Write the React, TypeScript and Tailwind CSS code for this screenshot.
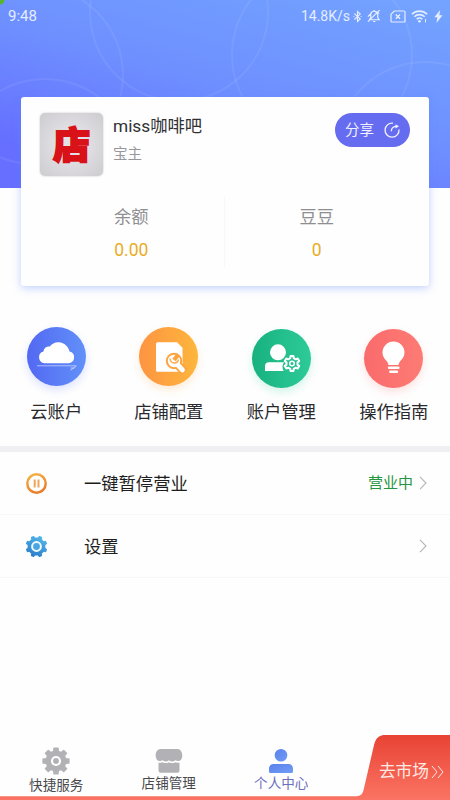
import type { ReactNode } from 'react';

// Toothed wheel as a polygon, shared by the settings, account and nav icons.
function gearPoints(cx: number, cy: number, teeth: number, outer: number, inner: number) {
  const pts: string[] = [];
  const step = (Math.PI * 2) / teeth;
  for (let i = 0; i < teeth; i++) {
    const a = i * step - Math.PI / 2;
    [
      [inner, -0.3],
      [outer, -0.19],
      [outer, 0.19],
      [inner, 0.3],
    ].forEach(([r, k]) => {
      pts.push(`${(cx + r * Math.cos(a + k * step)).toFixed(2)},${(cy + r * Math.sin(a + k * step)).toFixed(2)}`);
    });
  }
  return pts.join(' ');
}

function StatusBar() {
  return (
    <div className="relative flex h-[32px] items-center pl-[8px] pr-[7px] text-[#e4edff]">
      <span className="text-[15px] leading-none">9:48</span>
      <span className="ml-auto text-[14px] leading-none">14.8K/s</span>
      <svg className="ml-[3px] h-[15px] w-[9px]" viewBox="0 0 10 15" fill="none" stroke="currentColor" strokeWidth="1.3">
        <path d="M1.500 4.300 8 10.300 5 13V2l3 2.800-6.500 6" />
        <path d="M.5 7.500h1M8.500 7.500h1" />
      </svg>
      <svg className="ml-[5px] h-[14px] w-[14px]" viewBox="0 0 15 15" fill="none" stroke="currentColor" strokeWidth="1.300">
        <path d="M3 11.500h10l-1.500-2.200V6A3.800 3.800 0 0 0 4 5.400v3.900L2.600 11.500M6.500 13.400h2.500M1 13.500 13.500 1.200M1 8.200l4-4.400M11 3l2 2M7.600 1v1" />
      </svg>
      <svg className="ml-[9px] h-[13px] w-[16px]" viewBox="0 0 16 13" fill="none" stroke="currentColor" strokeWidth="1.200">
        <path d="M4.300 1h9.700a1 1 0 0 1 1 1v9a1 1 0 0 1-1 1H2a1 1 0 0 1-1-1V4.300z" />
        <path d="m5.800 4.500 4.200 4.200m0-4.200L5.800 8.700" strokeWidth="1.500" />
      </svg>
      <svg className="ml-[5px] h-[13px] w-[17px]" viewBox="0 0 17 13" fill="none" stroke="currentColor" strokeWidth="1.600">
        <path d="M.8 4.300a11 11 0 0 1 15.400 0M3.300 6.800a7.400 7.400 0 0 1 10.400 0M5.700 9.200a4 4 0 0 1 5.600 0" />
        <circle cx="8.500" cy="11.300" r="1.300" fill="currentColor" stroke="none" />
        <path d="M14.500 9v3.500" strokeWidth="1" />
      </svg>
      <svg className="ml-[6px] h-[13px] w-[9px]" viewBox="0 0 9 13" fill="currentColor">
        <path d="M6.200 0 .3 7.300h3L2.500 13l6-7.700H5.300z" />
      </svg>
    </div>
  );
}

function Stat({ label, value }: { label: string; value: string }) {
  return (
    <div className="flex flex-1 flex-col items-center">
      <span className="mt-[12px] text-[17.300px] leading-[18px] text-[#8f8f93]">{label}</span>
      <span className="mt-[14px] text-[17.500px] leading-[20px] text-[#e9ac25]">{value}</span>
    </div>
  );
}

function ShopCard() {
  return (
    <section className="relative mx-[21px] mt-[65px] h-[189px] rounded-[3px] bg-[#fefefe] shadow-[0_2px_9px_rgba(90,135,255,0.38)]">
      <div className="flex pl-[19px] pr-[19px] pt-[16px]">
        <div className="flex h-[63px] w-[63px] items-center justify-center rounded-[5px] bg-[radial-gradient(circle,#e2e1e5_30%,#cdcbd0_100%)] shadow-[0_0_2px_rgba(0,0,0,0.25)]">
          <span className="mt-[4px] text-[37px] font-black leading-none text-[#d9121a] [-webkit-text-stroke:2px_#d9121a] [paint-order:stroke] [stroke-linejoin:round]">店</span>
        </div>
        <div className="ml-[10px] pt-[3px]">
          <h1 className="text-[17.300px] leading-[20px] text-[#303034]">miss咖啡吧</h1>
          <p className="mt-[11px] text-[14.500px] leading-[16px] text-[#98989c]">宝主</p>
        </div>
        <button className="ml-auto flex h-[34px] w-[75px] items-center rounded-full bg-[#656cf0] pl-[10px] text-[#f1f1ff]">
          <span className="mt-[2px] text-[14.500px] leading-none">分享</span>
          <svg className="ml-[10px] h-[16px] w-[16px]" viewBox="0 0 16 16" fill="none" stroke="currentColor" strokeWidth="1.300">
            <path d="M9 1.200A7 7 0 1 0 15 7.500" />
            <path d="M7.300 9.300c0-3 1.600-5 5.500-5" />
            <path d="M11.500 2.200 15 4.300l-3.500 2.200z" fill="currentColor" stroke="none" />
          </svg>
        </button>
      </div>
      <div className="mt-[20px] flex h-[72px] pl-[18px] pr-[20px]">
        <Stat label="余额" value="0.00" />
        <div className="w-px bg-[#f8f8fa]" />
        <Stat label="豆豆" value="0" />
      </div>
    </section>
  );
}

const shortcuts: { label: string; disc: string; icon: ReactNode }[] = [
  {
    label: '云账户',
    disc: 'bg-linear-to-r from-[#5368f2] to-[#6290f9] shadow-[0_4px_9px_rgba(90,115,250,0.2)]',
    icon: (
      <>
        <path d="M17.500 36.200a5.900 5.900 0 0 1-1-11.600c.2-3.200 3-5.500 6.300-5 2-3 5.500-4.600 9.200-4.300 5.300.4 9.500 4.300 10.500 9.300a5.900 5.900 0 0 1-.5 11.600z" fill="#fff" />
        <path d="M10 38.800h39M49.500 39l-6 4.200M43.500 41h4" stroke="#fff" strokeWidth=".7" opacity=".75" fill="none" />
      </>
    ),
  },
  {
    label: '店铺配置',
    disc: 'bg-linear-to-r from-[#fd9442] to-[#fdb63c] shadow-[0_4px_9px_rgba(255,165,60,0.2)]',
    icon: (
      <>
        <path d="M18.500 15.300H38l5.500 5.500v22a2 2 0 0 1-2 2h-23a1.500 1.500 0 0 1-1.500-1.500V16.800a1.500 1.500 0 0 1 1.500-1.500z" fill="#fff" />
        <path d="m35 34 10.500 11" stroke="#fda43f" strokeWidth="8.500" />
        <circle cx="35" cy="34" r="8.200" fill="#fda43f" />
        <circle cx="35" cy="34" r="6.200" fill="#fff" />
        <path d="m37 36 6.500 7" stroke="#fff" strokeWidth="4.800" strokeLinecap="round" />
        <path d="m39 28-4 5" stroke="#fda43f" strokeWidth="4.200" />
        <path d="M31 31.500c.3 2.500 2 4.500 4.500 4.500s3.500-1.500 4-3.500" stroke="#fda43f" strokeWidth="1.300" fill="none" />
      </>
    ),
  },
  {
    label: '账户管理',
    disc: 'mt-[2px] bg-linear-to-r from-[#16b17e] to-[#2dcb98] shadow-[0_4px_9px_rgba(40,205,150,0.2)]',
    icon: (
      <>
        <circle cx="26" cy="23.300" r="8" fill="#fff" />
        <path d="M13 42v-4.800a4 4 0 0 1 4-4h15c-2 3-1.800 6-.3 8.800z" fill="#fff" />
        <polygon points={gearPoints(40, 34.500, 6, 7.600, 5.600)} fill="none" stroke="#fff" strokeWidth="2" strokeLinejoin="round" />
        <circle cx="40" cy="34.500" r="2.300" fill="none" stroke="#fff" strokeWidth="1.500" />
      </>
    ),
  },
  {
    label: '操作指南',
    disc: 'mt-[2px] bg-linear-to-r from-[#fa6b6c] to-[#fd7b74] shadow-[0_4px_9px_rgba(255,110,110,0.2)]',
    icon: (
      <>
        <path d="M24.500 36c-.4-4.500-6-6-6-12.500a11 11 0 0 1 22 0c0 6.500-5.600 8-6 12.500z" fill="#fff" />
        <path d="M25 38.800h9.400M26.300 42.800h6.700" stroke="#fff" strokeWidth="2.400" strokeLinecap="round" />
      </>
    ),
  },
];

function Shortcuts() {
  return (
    <nav className="mt-[41px] grid h-[119px] grid-cols-4">
      {shortcuts.map(({ label, disc, icon }) => (
        <a key={label} className="flex flex-col items-center">
          <div className="h-[75px]">
            <div className={`h-[59px] w-[59px] rounded-full ${disc}`}>
              <svg className="h-[59px] w-[59px]" viewBox="0 0 59 59">{icon}</svg>
            </div>
          </div>
          <span className="whitespace-nowrap text-[17.300px] leading-[20px] text-[#29292d]">{label}</span>
        </a>
      ))}
    </nav>
  );
}

function MenuRow({ icon, label, status }: { icon: ReactNode; label: string; status?: string }) {
  return (
    <div className="flex h-[63px] items-center border-b border-[#f8f8fa] pl-[26px] pr-[23px]">
      {icon}
      <span className="ml-[37px] mt-[2px] text-[17.300px] leading-[20px] text-[#1d1d20]">{label}</span>
      {status && <span className="-mt-px ml-auto text-[15px] leading-[20px] text-[#249540]">{status}</span>}
      <svg
        className={`${status ? 'ml-[6px]' : 'ml-auto'} h-[14px] w-[8px] text-[#b5b5b9]`}
        viewBox="0 0 8 14"
        fill="none"
        stroke="currentColor"
        strokeWidth="1.100"
      >
        <path d="m1 .8 6 6.200-6 6.200" />
      </svg>
    </div>
  );
}

function PauseIcon() {
  return (
    <svg className="h-[21px] w-[21px]" viewBox="0 0 21 21" fill="none">
      <defs>
        <linearGradient id="pause" x1="0" y1="0" x2=".4" y2="1">
          <stop stopColor="#f4b545" />
          <stop offset="1" stopColor="#ea7f2c" />
        </linearGradient>
      </defs>
      <circle cx="10.500" cy="10.500" r="9.200" stroke="url(#pause)" strokeWidth="2.500" />
      <path d="M8.700 6.500v8M12.500 6.500v8" stroke="#efa558" strokeWidth="2" />
    </svg>
  );
}

function SettingsIcon() {
  return (
    <svg className="h-[21px] w-[21px]" viewBox="0 0 21 21">
      <defs>
        <linearGradient id="settings" x1="0" y1="0" x2="0" y2="1">
          <stop stopColor="#51b5e8" />
          <stop offset="1" stopColor="#2a7dcc" />
        </linearGradient>
      </defs>
      <g transform="rotate(22.500 10.500 10.500)">
        <polygon points={gearPoints(10.500, 10.500, 8, 11, 9)} fill="url(#settings)" />
      </g>
      <circle cx="10.500" cy="10.500" r="4.400" fill="#4aa5e3" stroke="#f3faff" strokeWidth="2" />
    </svg>
  );
}

function TabBar() {
  return (
    <footer className="relative mt-auto h-[65px] shrink-0">
      <div className="grid h-full grid-cols-4 text-[13.600px] leading-[16px] text-[#49494d]">
        <a className="flex flex-col items-center pt-[12px]">
          <svg className="h-[28px] w-[28px]" viewBox="0 0 28 28">
            <polygon points={gearPoints(14, 14, 8, 13, 9.800)} fill="#b2b2b6" stroke="#b2b2b6" strokeWidth="1.500" strokeLinejoin="round" />
            <circle cx="14" cy="14" r="4" fill="#b2b2b6" stroke="#fff" strokeWidth="2.200" />
          </svg>
          <span className="mt-[2px]">快捷服务</span>
        </a>
        <a className="flex flex-col items-center pt-[13px]">
          <svg className="h-[26px] w-[28px]" viewBox="0 0 28 26" fill="#b2b2b6">
            <path d="M5.500 1h17c3 0 4.800 3.200 4.800 6.300 0 3-1.300 5.700-3.600 5.700-1.600 0-2.500-.3-3.300-.8-1 .8-2 1.200-3.200 1.200s-2.200-.4-3.200-1.200c-1 .8-2 1.200-3.200 1.200s-2.200-.4-3.200-1.200c-.8.5-1.700.8-3.300.8C2 13 .7 10.300.7 7.300.7 4.200 2.500 1 5.500 1z" />
            <path d="M3.500 14.800c1.500 0 2.700-.1 4-.6 2 1.200 4.500 1.200 6.500 0 2 1.200 4.500 1.200 6.500 0 1.300.5 2.500.6 4 .6v7.700a2.200 2.200 0 0 1-2.200 2.200H5.700a2.200 2.200 0 0 1-2.200-2.200z" />
          </svg>
          <span className="mt-px">店铺管理</span>
        </a>
        <a className="flex flex-col items-center pt-[13px] text-[#6c70bd]">
          <svg className="h-[26px] w-[26px]" viewBox="0 0 26 26">
            <defs>
              <linearGradient id="person" x1="0" y1="0" x2="1" y2="1">
                <stop stopColor="#5a80ec" />
                <stop offset="1" stopColor="#719df5" />
              </linearGradient>
            </defs>
            <g fill="url(#person)">
              <circle cx="13" cy="7.300" r="6.300" />
              <path d="M1 23.500v-3a4.500 4.500 0 0 1 4.500-4.500h15a4.500 4.500 0 0 1 4.500 4.500v3a1.500 1.500 0 0 1-1.500 1.500h-21A1.500 1.500 0 0 1 1 23.500z" />
            </g>
          </svg>
          <span className="mt-px">个人中心</span>
        </a>
      </div>
      {/* market banner lies over the tab bar and runs out into a thin strip */}
      <svg className="absolute inset-0 h-[65px] w-[450px]" viewBox="0 0 450 65">
        <defs>
          <linearGradient id="market" x1="0" y1="0" x2="0" y2="1">
            <stop stopColor="#e84334" />
            <stop offset="1" stopColor="#fb7463" />
          </linearGradient>
        </defs>
        <path d="M0 61.300h355c5 0 7.300-1.500 8.500-6L374 10c2-7.500 5-10 12-10H450v65H0z" fill="url(#market)" />
      </svg>
      <a className="absolute right-[6px] top-[27px] flex items-center text-[#ffe9e4]">
        <span className="text-[16.700px] leading-[20px]">去市场</span>
        <svg className="ml-[2px] h-[14px] w-[13px]" viewBox="0 0 13 14" fill="none" stroke="currentColor" strokeWidth="1">
          <path d="m1 1 5 6-5 6M7 1l5 6-5 6" />
        </svg>
      </a>
    </footer>
  );
}

export default function App() {
  return (
    <div className="relative flex h-[800px] w-[450px] flex-col overflow-hidden bg-[#fefefe] font-['Roboto','Noto_Sans_CJK_SC',sans-serif]">
      <div className="absolute inset-x-0 top-0 h-[188px] overflow-hidden bg-[linear-gradient(196deg,#73a2ff_5%,#6e8fff_48%,#666fff_85%)]">
        <svg className="h-[188px] w-[450px]" viewBox="0 0 450 188" fill="none" stroke="#fff" strokeOpacity=".07" strokeWidth="2">
          <circle cx="34" cy="75" r="89" />
          <circle cx="45" cy="168" r="89" />
          <circle cx="179" cy="12" r="89" />
          <circle cx="322" cy="55" r="90" />
          <circle cx="425" cy="151" r="89" />
          <circle cx="0" cy="0" r="4.500" fill="#55b52c" stroke="none" />
        </svg>
      </div>
      <StatusBar />
      <ShopCard />
      <Shortcuts />
      <div className="h-[6px] shrink-0 bg-[#f0eff2]" />
      <MenuRow icon={<PauseIcon />} label="一键暂停营业" status="营业中" />
      <MenuRow icon={<SettingsIcon />} label="设置" />
      <TabBar />
    </div>
  );
}
